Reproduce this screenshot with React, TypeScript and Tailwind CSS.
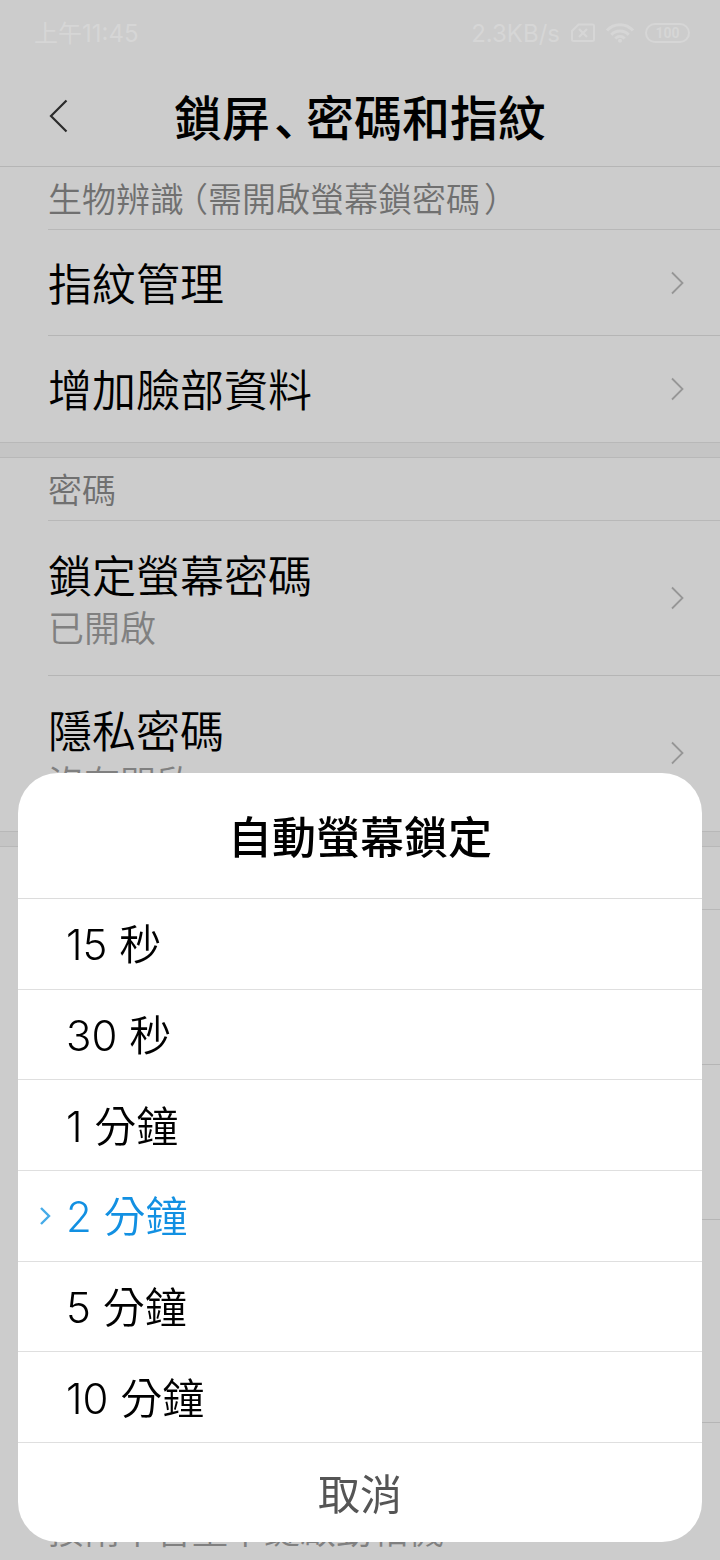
import { useState } from "react";

type Item = { id: string; title: string; summary?: string[] };
type Group = { id: string; label: string; items: Item[] };

const groups: Group[] = [
  {
    id: "biometrics",
    label: "生物辨識（需開啟螢幕鎖密碼）",
    items: [
      { id: "fingerprint", title: "指紋管理" },
      { id: "face", title: "增加臉部資料" },
    ],
  },
  {
    id: "password",
    label: "密碼",
    items: [
      { id: "screen-password", title: "鎖定螢幕密碼", summary: ["已開啟"] },
      { id: "privacy-password", title: "隱私密碼", summary: ["沒有開啟"] },
    ],
  },
  {
    id: "lock-screen",
    label: "",
    items: [
      { id: "auto-lock", title: "", summary: [""] },
      { id: "clock", title: "", summary: [""] },
      { id: "notifications", title: "", summary: ["", ""] },
      { id: "camera", title: "", summary: ["按兩下音量下鍵啟動相機"] },
    ],
  },
];

const delays = ["15 秒", "30 秒", "1 分鐘", "2 分鐘", "5 分鐘", "10 分鐘"];

/* Punctuation is set in the font's half-width forms, with some air round it. */
function Tight({ text }: { text: string }) {
  return (
    <>
      {text.split(/([（）、])/).map((part, i) => {
        if (part === "（")
          return (
            <span key={i} className="pl-[7px] [font-feature-settings:'halt']">
              {part}
            </span>
          );
        if (part === "）")
          return (
            <span key={i} className="pl-1 [font-feature-settings:'halt']">
              {part}
            </span>
          );
        /* The Japanese form sits low and to the left, as a comma does. */
        if (part === "、")
          return (
            <span
              key={i}
              lang="ja"
              className="pr-2 pl-1 font-['Noto_Sans_CJK_JP',sans-serif] [font-feature-settings:'halt']"
            >
              {part}
            </span>
          );
        return <span key={i}>{part}</span>;
      })}
    </>
  );
}

function StatusBar() {
  return (
    <div className="flex h-[66px] items-center justify-between pr-[30px] pl-[34px] text-2xl font-normal text-[#d6d6d6]">
      <span className="pt-0.5">上午11:45</span>
      <div className="flex items-center gap-[11px]">
        <span className="pt-0.5">2.3KB/s</span>
        <svg width="24" height="20" viewBox="0 0 24 20" fill="none" stroke="currentColor" strokeWidth="2">
          <path d="M7.500 1.500H21.500Q23 1.500 23 3V16.500Q23 18 21.500 18H2.500Q1 18 1 16.500V8Z" />
          <path d="M8 6l8 8M16 6l-8 8" strokeWidth="2.200" />
        </svg>
        <svg width="28" height="20" viewBox="0 0 28 20" fill="none" stroke="currentColor" strokeWidth="3">
          <path d="M1 7.500C8-.3 20-.3 27 7.500" />
          <path d="M5.300 11.700C10.300 6.700 17.700 6.700 22.700 11.700" />
          <path d="M9.300 15.500C12 12.800 16 12.800 18.700 15.500" />
          <circle cx="14" cy="17.700" r="2" fill="currentColor" stroke="none" />
        </svg>
        <span className="flex h-5 w-[45px] items-center justify-center rounded-full border-2 border-current font-['Roboto',sans-serif] text-sm font-bold">
          100
        </span>
      </div>
    </div>
  );
}

function Chevron() {
  return (
    <svg className="shrink-0 text-[#969696]" width="14" height="24" viewBox="0 0 14 24" fill="none" stroke="currentColor" strokeWidth="1.800">
      <path d="M2 1.500L12.500 12L2 22.500" />
    </svg>
  );
}

function Row({ item }: { item: Item }) {
  return (
    <li className="ml-12 border-b border-[#b5b5b5] last:border-transparent">
      <button
        type="button"
        className={
          item.summary
            ? "flex w-full items-center justify-between pr-9 text-left"
            : "flex h-[105px] w-full items-center justify-between pr-9 text-left"
        }
      >
        <span className={item.summary ? "block pt-7 pb-[22px]" : "block pt-1"}>
          <span className="block min-h-14 text-[44px] leading-[56px] text-black">{item.title}</span>
          {item.summary?.map((line, i) => (
            <span key={i} className="block min-h-12 text-4xl leading-[48px] text-[#808080]">
              {line}
            </span>
          ))}
        </span>
        <Chevron />
      </button>
    </li>
  );
}

export default function App() {
  const [delay, setDelay] = useState("2 分鐘");
  const [open, setOpen] = useState(true);

  return (
    <div
      lang="zh-Hant"
      className="h-screen overflow-hidden bg-[#cccccc] font-['Inter','Noto_Sans_CJK_TC',sans-serif] font-[350]"
    >
      <StatusBar />
      <header className="grid h-[101px] grid-cols-[96px_1fr_96px] items-center border-b border-[#b5b5b5]">
        <button type="button" aria-label="返回" className="pl-[49px]">
          <svg width="19" height="34" viewBox="0 0 19 34" fill="none" stroke="#2b2b2b" strokeWidth="2.200">
            <path d="M17.500 1.500L2 17L17.500 32.500" />
          </svg>
        </button>
        <h1 className="pt-0.5 text-center text-5xl leading-[56px] font-medium text-black">
          <Tight text="鎖屏、密碼和指紋" />
        </h1>
      </header>

      <main>
        {groups.map((group, i) => (
          <section key={group.id}>
            {i > 0 && <div className="h-4 border-y border-[#b8b8b8] bg-[#c5c5c5]" />}
            <h2 className="ml-12 flex h-[63px] items-center border-b border-[#b8b8b8] pt-0.5 text-[34px] text-[#707070]">
              <Tight text={group.label} />
            </h2>
            <ul>
              {group.items.map((item) => (
                <Row key={item.id} item={item} />
              ))}
            </ul>
          </section>
        ))}
      </main>

      {open && (
        <div
          role="dialog"
          aria-labelledby="delay-title"
          className="fixed inset-x-[18px] bottom-[18px] overflow-hidden rounded-[40px] bg-white"
        >
          <h2
            id="delay-title"
            className="flex h-[126px] items-center justify-center border-b border-[#dcdcdc] pt-1 text-[44px] font-medium text-black"
          >
            自動螢幕鎖定
          </h2>
          <div className="grid h-[544px] grid-rows-6">
            {delays.map((d) => (
              <button
                key={d}
                type="button"
                aria-pressed={d === delay}
                onClick={() => setDelay(d)}
                className={
                  d === delay
                    ? "flex items-center border-b border-[#dfdfdf] text-left text-[42px] text-[#1290e2]"
                    : "flex items-center border-b border-[#dfdfdf] text-left text-[42px] text-black"
                }
              >
                <span className="flex w-12 pl-[21px]">
                  {d === delay && (
                    <svg width="13" height="20" viewBox="0 0 13 20" fill="none" stroke="#45abe8" strokeWidth="2.400">
                      <path d="M2 2L10 10L2 18" />
                    </svg>
                  )}
                </span>
                <span className="pt-0.5">{d}</span>
              </button>
            ))}
          </div>
          <button
            type="button"
            onClick={() => setOpen(false)}
            className="flex h-[99px] w-full items-center justify-center pt-1 text-[42px] font-normal text-[#555555]"
          >
            取消
          </button>
        </div>
      )}
    </div>
  );
}
